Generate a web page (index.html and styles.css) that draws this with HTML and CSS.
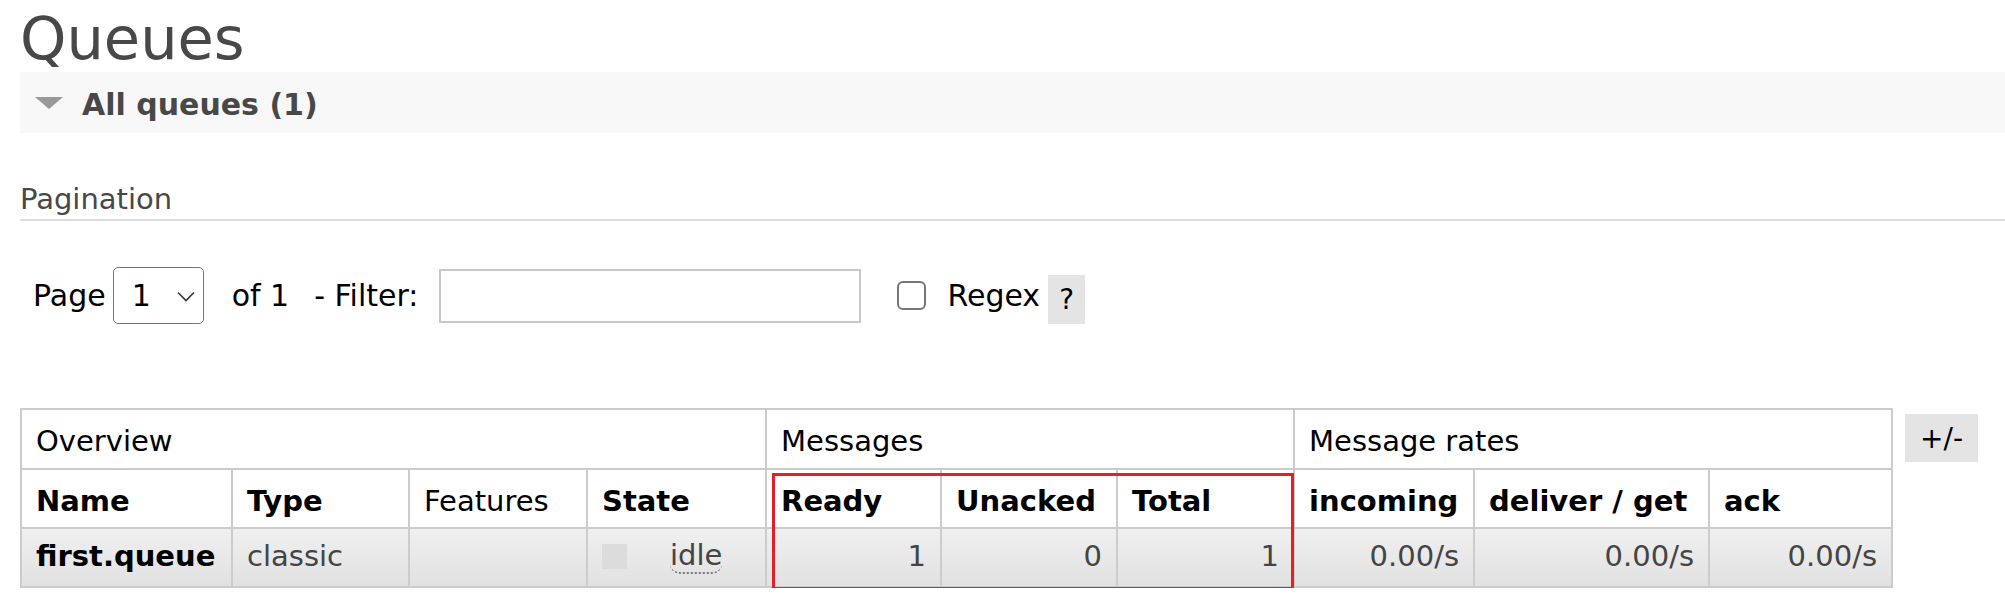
FILE: index.html
```html
<!DOCTYPE html>
<html>
<head>
<meta charset="utf-8">
<link rel="stylesheet" href="styles.css">
</head>
<body>
<h1 class="title">Queues</h1>
<div class="section-bar">
  <span class="tri"></span>
  <span class="section-title">All queues (1)</span>
</div>
<h2 class="sub">Pagination</h2>
<div class="pager">
  <span class="lbl">Page</span>
  <span class="select"><span class="sel-val">1</span><svg class="chev" width="18" height="11" viewBox="0 0 18 11"><polyline points="1,1.5 9,9.5 17,1.5" fill="none" stroke="#333" stroke-width="1.6"/></svg></span>
  <span class="lbl of">of 1</span>
  <span class="lbl filt">- Filter:</span>
  <span class="input"></span>
  <span class="check"></span>
  <span class="lbl regex">Regex</span>
  <span class="help">?</span>
</div>
<div class="table-area">
  <div class="table-wrap">
    <table class="list">
      <colgroup>
        <col class="c-name"><col class="c-type"><col class="c-feat"><col class="c-state">
        <col class="c-ready"><col class="c-unack"><col class="c-total">
        <col class="c-inc"><col class="c-del"><col class="c-ack">
      </colgroup>
      <tr class="grp">
        <th colspan="4">Overview</th>
        <th colspan="3">Messages</th>
        <th colspan="3">Message rates</th>
      </tr>
      <tr class="hdr">
        <th>Name</th><th>Type</th><th class="plain">Features</th><th>State</th>
        <th>Ready</th><th>Unacked</th><th>Total</th>
        <th>incoming</th><th>deliver / get</th><th>ack</th>
      </tr>
      <tr class="row">
        <td class="name">first.queue</td>
        <td>classic</td>
        <td></td>
        <td><span class="state"><span class="sq"></span><span class="idle">idle</span></span></td>
        <td class="num">1</td><td class="num">0</td><td class="num">1</td>
        <td class="num">0.00/s</td><td class="num">0.00/s</td><td class="num">0.00/s</td>
      </tr>
    </table>
    <div class="mark"></div>
  </div>
  <span class="toggle">+/-</span>
</div>
</body>
</html>
```
FILE: styles.css
```css
html, body {
  margin: 0;
  padding: 0;
  background: #ffffff;
  font-family: "DejaVu Sans", Verdana, sans-serif;
  color: #000;
}
.title {
  margin: 0;
  padding: 6px 0 0 20px;
  font-size: 59px;
  line-height: 66px;
  font-weight: normal;
  color: #484848;
}
.section-bar {
  margin-left: 20px;
  height: 61px;
  background: #f8f8f8;
  display: flex;
  align-items: center;
}
.tri {
  width: 0;
  height: 0;
  margin-left: 15px;
  border-left: 14px solid transparent;
  border-right: 14px solid transparent;
  border-top: 12px solid #999;
}
.section-title {
  margin-left: 19px;
  margin-top: 4px;
  font-size: 30px;
  font-weight: bold;
  color: #484848;
}
.sub {
  margin: 49px 0 0 20px;
  padding: 0 0 3px 0;
  font-size: 29px;
  line-height: 34px;
  font-weight: normal;
  color: #484848;
  border-bottom: 2px solid #dddddd;
}
.pager {
  margin-top: 46px;
  padding-left: 33px;
  height: 57px;
  display: flex;
  align-items: center;
  font-size: 30px;
}
.lbl { color: #000; }
.select {
  margin-left: 7px;
  width: 91px;
  height: 57px;
  box-sizing: border-box;
  border: 1.5px solid #767676;
  border-radius: 5px;
  display: flex;
  align-items: center;
  padding-left: 18px;
}
.sel-val { width: 45px; }
.chev { margin-top: 2px; }
.of { margin-left: 28px; }
.filt { margin-left: 25px; }
.input {
  margin-left: 21px;
  width: 422px;
  height: 54px;
  box-sizing: border-box;
  border: 2px solid #c8c8c8;
  background: #fff;
}
.check {
  margin-left: 36px;
  width: 29px;
  height: 29px;
  box-sizing: border-box;
  border: 2.5px solid #767676;
  border-radius: 6px;
  background: #fff;
}
.regex { margin-left: 21px; }
.help {
  margin-left: 8px;
  margin-top: 8px;
  width: 37px;
  height: 49px;
  background: #e4e4e4;
  font-size: 28px;
  display: flex;
  align-items: center;
  justify-content: center;
}
.table-area {
  margin-top: 84px;
  padding-left: 20px;
  display: flex;
  align-items: flex-start;
}
.table-wrap {
  position: relative;
}
.list {
  border-collapse: collapse;
  table-layout: fixed;
  width: 1871px;
  font-size: 29px;
}
.c-name { width: 211px; }
.c-type { width: 177px; }
.c-feat { width: 178px; }
.c-state { width: 179px; }
.c-ready { width: 175px; }
.c-unack { width: 176px; }
.c-total { width: 177px; }
.c-inc { width: 180px; }
.c-del { width: 235px; }
.c-ack { width: 183px; }
.list th, .list td {
  border: 2px solid #cccccc;
  padding: 0 14px;
  text-align: left;
  white-space: nowrap;
  overflow: visible;
}
.grp th {
  height: 54px;
  padding-top: 4px;
  font-weight: normal;
}
.hdr th {
  height: 53px;
  padding-top: 4px;
  font-weight: bold;
}
.hdr th.plain { font-weight: normal; }
.row td {
  height: 54px;
  padding-bottom: 3px;
  color: #444;
  background: linear-gradient(#f0f0f0, #e1e1e1);
}
.row td.name {
  color: #000;
  font-weight: bold;
}
.row td.num { text-align: right; }
.state {
  display: flex;
  align-items: center;
}
.sq {
  width: 25px;
  height: 25px;
  background: #dcdcdc;
}
.idle {
  margin-left: 43px;
  line-height: 34px;
  border-bottom: 2px dotted #777;
  border-radius: 0 0 10px 10px;
}
.mark {
  position: absolute;
  left: 752px;
  top: 65px;
  width: 522px;
  height: 117px;
  box-sizing: border-box;
  border: 3px solid #e3202a;
  z-index: 2;
}
.toggle {
  margin-left: 12px;
  margin-top: 6px;
  width: 73px;
  height: 48px;
  background: #e4e4e4;
  font-size: 28px;
  display: flex;
  align-items: center;
  justify-content: center;
}
```
